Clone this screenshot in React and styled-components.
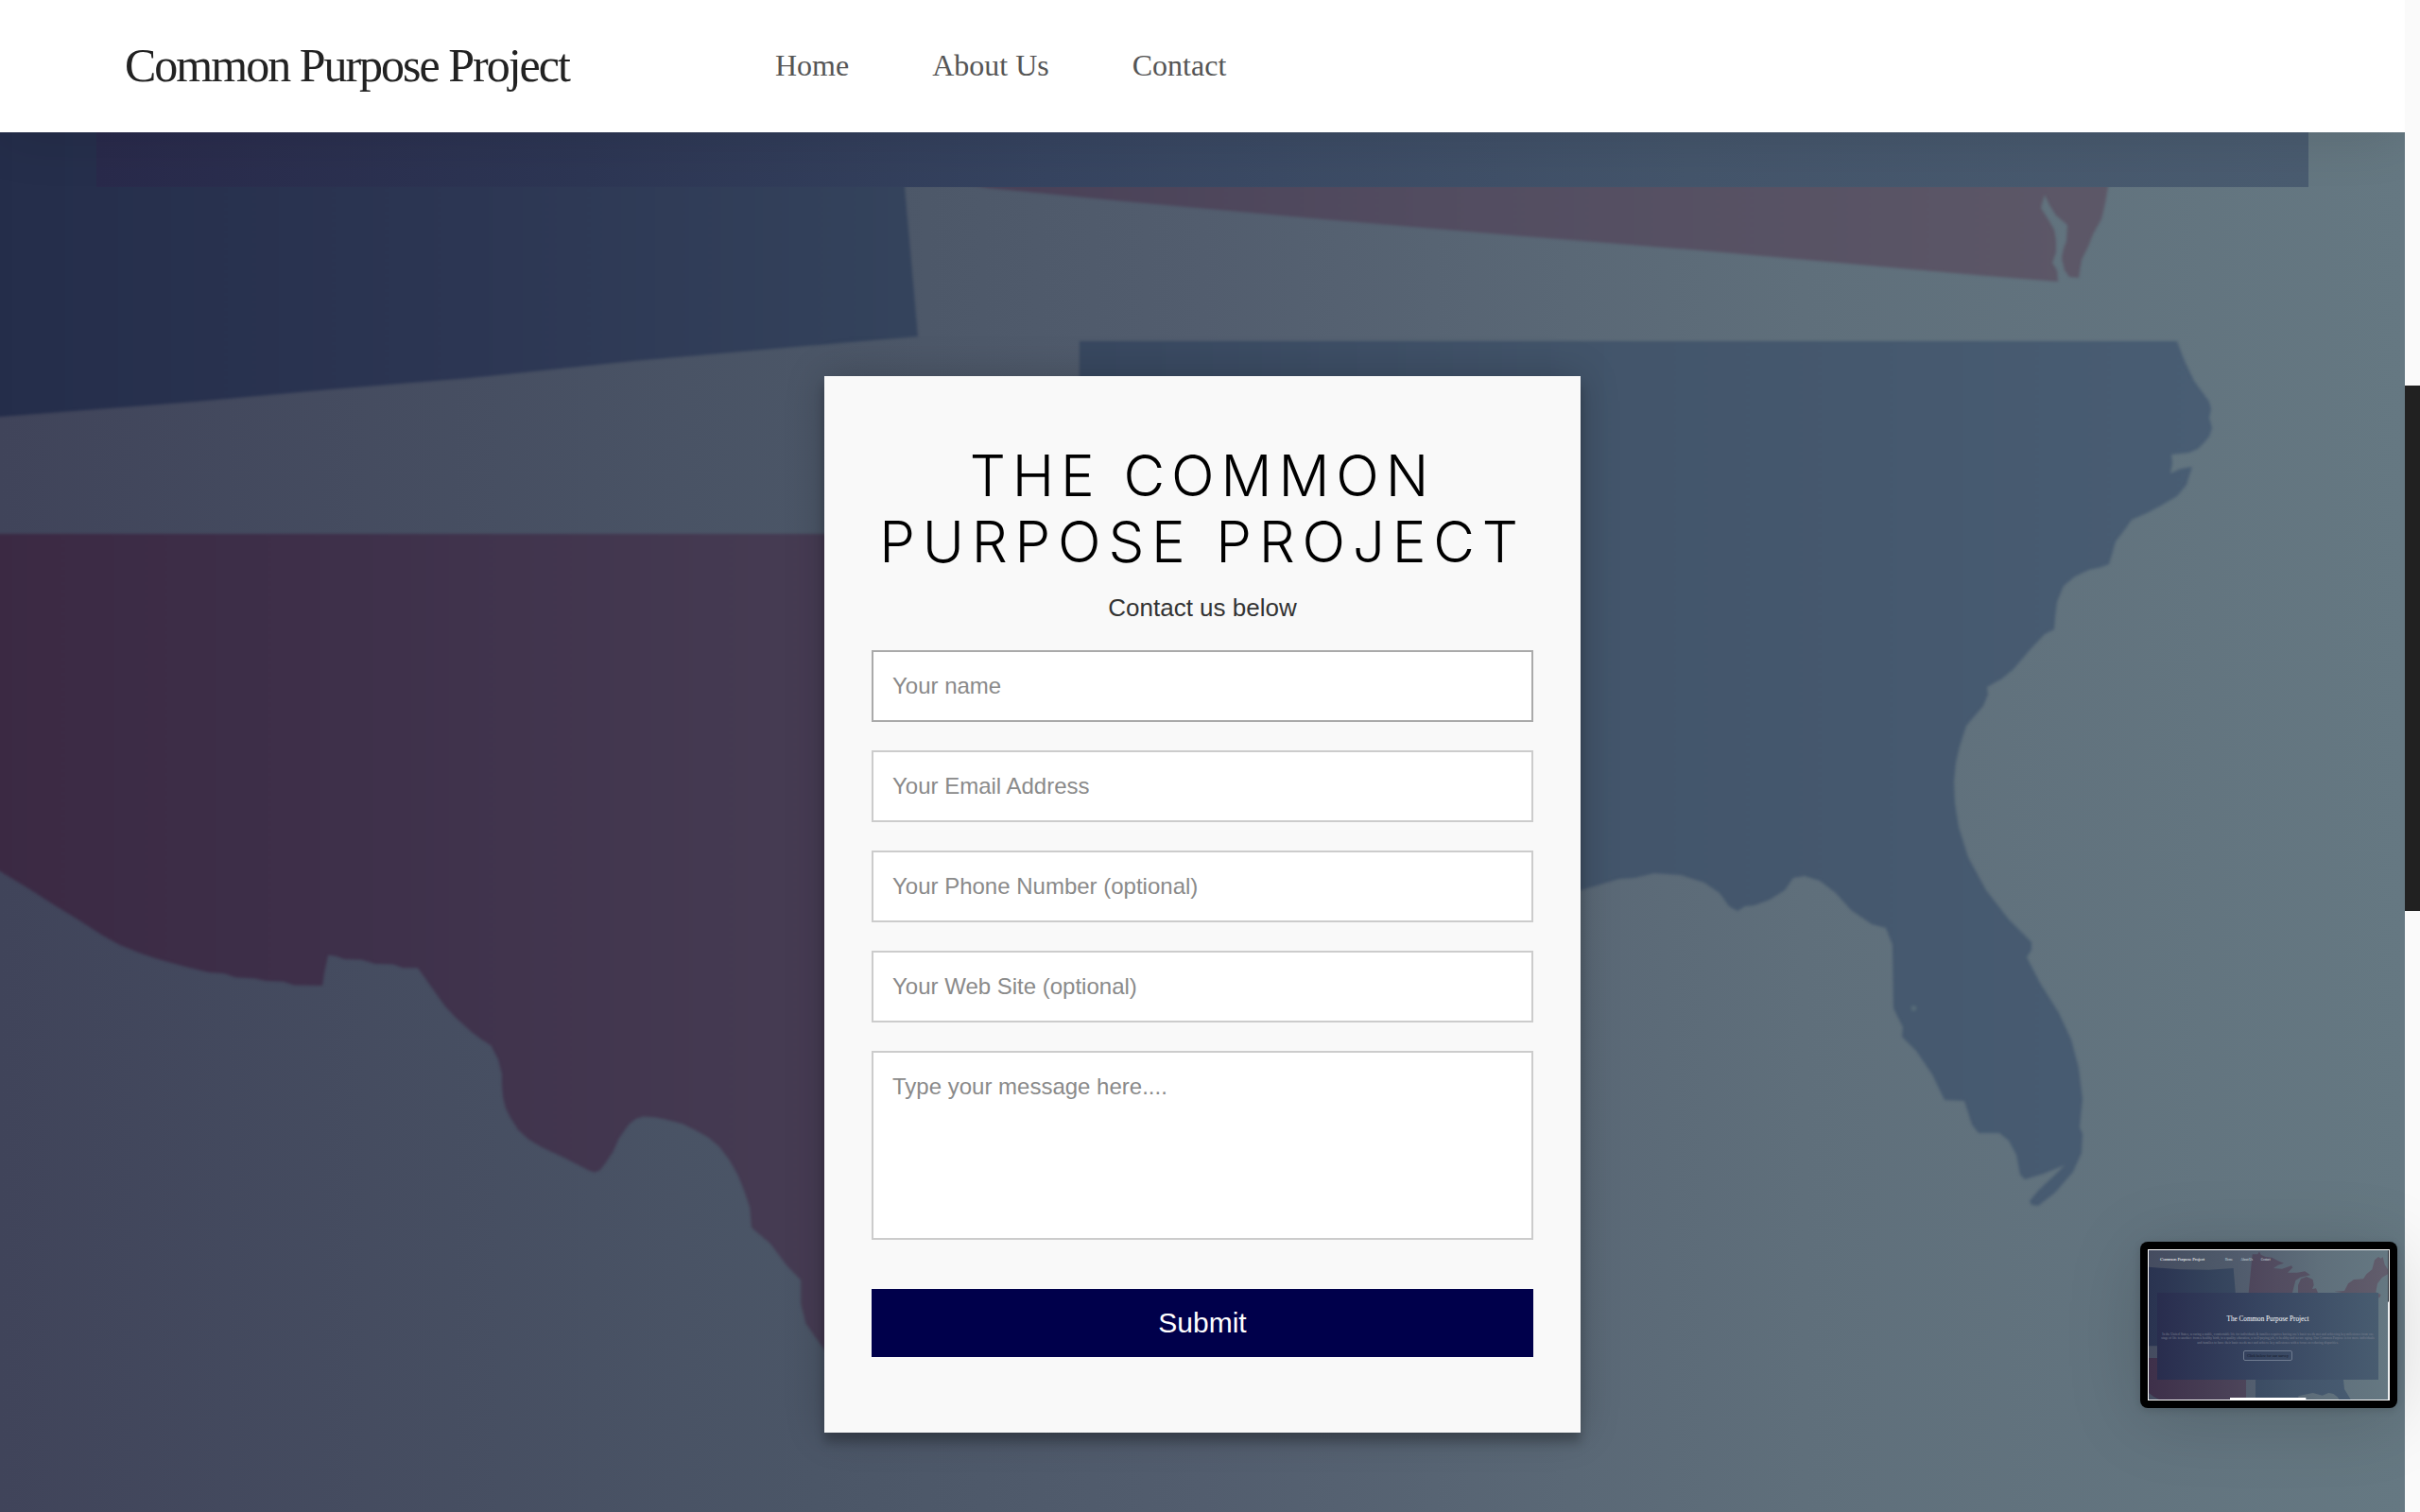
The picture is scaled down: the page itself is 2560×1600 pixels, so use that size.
import React from "react";
import styled, { createGlobalStyle } from "styled-components";

const GlobalStyle = createGlobalStyle`
  * { box-sizing: border-box; }
  body { margin: 0; background: #f9f9f9; overflow: hidden; }
`;

const serif = `"Liberation Serif", "Times New Roman", serif`;
const sans = `"Liberation Sans", Arial, sans-serif`;

const Screen = styled.div`
  display: grid;
  grid-template-columns: 1fr 16px;
  width: 2560px;
  height: 1600px;
  overflow: hidden;
`;
const Page = styled.div`
  display: flex;
  flex-direction: column;
  min-width: 0;
  overflow: hidden;
`;
const Header = styled.header`
  position: relative;
  z-index: 1;
  display: flex;
  align-items: center;
  height: 140px;
  padding: 0 0 2px 132px;
  background: #fff;
  box-shadow: 0 4px 60px rgba(0, 0, 0, 0.12);
`;
const Brand = styled.a`
  width: 688px;
  padding-bottom: 1px;
  font: 50px/60px ${serif};
  letter-spacing: -2px;
  color: #222;
`;
const Nav = styled.nav`
  display: flex;
  gap: 88px;
  font: 32px/40px ${serif};
  color: #555;
`;
const NavLink = styled.a``;

const Hero = styled.main`
  position: relative;
  flex: 1;
  display: flex;
  flex-direction: column;
  align-items: center;
  overflow: hidden;
`;
const Backdrop = styled.svg`
  position: absolute;
  inset: 0;
  width: 100%;
  height: 100%;
`;
const Banner = styled.div`
  position: relative;
  width: 2340px;
  height: 58px;
  background: linear-gradient(90deg, #292a4b, #2d3654 22%, #364460 43%, #44556b 72%, #4a5c70);
`;
const Card = styled.form`
  position: relative;
  display: flex;
  flex-direction: column;
  width: 800px;
  height: 1118px;
  margin-top: 200px;
  padding: 70px 50px 80px;
  background: #f9f9f9;
  box-shadow: 0 0 40px rgba(0, 0, 0, 0.2), 0 10px 10px rgba(0, 0, 0, 0.24);
`;
const Title = styled.h1`
  display: flex;
  flex-direction: column;
  align-items: center;
  margin: 0 -10px;
  font: 300 60px/70px Inter, sans-serif;
  white-space: nowrap;
  color: #000;
`;
const TitleLine = styled.span`
  letter-spacing: ${(p) => p.$tracking}px;
`;
const Lead = styled.p`
  margin: 18px 0 27px;
  font: 26px/35px ${sans};
  text-align: center;
  color: #333;
`;
const Fields = styled.div`
  display: flex;
  flex-direction: column;
  gap: 30px;
`;
const Field = styled.input`
  display: block;
  width: 100%;
  height: ${(p) => p.$height || 76}px;
  padding: 20px;
  border: 2px solid ${(p) => (p.$active ? "#aaa" : "#ccc")};
  border-radius: 0;
  outline: none;
  resize: none;
  background: #fff;
  font: 24px/32px ${sans};
  &::placeholder { color: #8a8a8a; opacity: 1; }
`;
const Submit = styled.button`
  height: 72px;
  margin-top: 52px;
  padding: 0;
  border: 0;
  background: #00004b;
  color: #fff;
  font: 30px/72px ${sans};
`;

const Strip = styled.aside`
  display: flex;
  flex-direction: column;
  padding-top: 408px;
  background: #fafafa;
`;
const StripBlock = styled.div`
  height: 556px;
  background: #212121;
`;

const Preview = styled.div`
  position: absolute;
  left: 2264px;
  top: 1314px;
  z-index: 2;
  width: 272px;
  height: 176px;
  padding: 8px;
  border-radius: 8px;
  background: #000;
  box-shadow: 0 10px 80px rgba(0, 0, 0, 0.15), 0 2px 8px rgba(0, 0, 0, 0.14);
`;
const PreviewScreen = styled.div`
  position: relative;
  height: 160px;
  font-family: ${serif};
  border: 1px solid #fff;
  overflow: hidden;
`;
const PreviewHeader = styled.div`
  position: relative;
  display: flex;
  align-items: center;
  height: 19px;
  padding-left: 12px;
`;
const PreviewBrand = styled.span`
  width: 69px;
  font-size: 5px;
  letter-spacing: -0.2px;
  color: #fff;
`;
const PreviewNav = styled.span`
  display: flex;
  gap: 8.8px;
  font-size: 3.2px;
  color: #dfe3e8;
`;
const PreviewBody = styled.div`
  position: relative;
  display: flex;
  flex-direction: column;
  align-items: center;
  width: 234px;
  height: 92px;
  margin: 26px 0 0 9px;
  padding-top: 23.5px;
  background: linear-gradient(90deg, #292d4e, #364460 45%, #485c70);
`;
const PreviewTitle = styled.div`
  font-size: 7.2px;
  line-height: 9px;
  white-space: nowrap;
  color: #fff;
`;
const PreviewText = styled.div`
  margin-top: 9px;
  font-size: 3.5px;
  line-height: 4.8px;
  text-align: center;
  white-space: nowrap;
  color: #7b8090;
`;
const PreviewButton = styled.div`
  width: 52px;
  height: 11px;
  margin-top: 5.5px;
  border: 1px solid #6f7b90;
  border-radius: 2px;
  font-size: 4.1px;
  line-height: 9px;
  text-align: center;
  color: #10141f;
`;

const WEST_BLUE = "-20,100 953,100 957,198 971,356 842,367 670,382 497,400 350,412 207,425 0,441 -20,443";
const WEST_COAST = [
  [1518, 1430], [1500, 1392], [1485, 1360], [1476, 1305], [1476, 1240], [1450, 1200], [1420, 1140], [1385, 1095],
  [1382, 1040], [1372, 995], [1360, 950], [1345, 910], [1325, 870], [1305, 845], [1285, 828], [1258, 808],
  [1230, 797], [1207, 790], [1185, 788], [1172, 794], [1160, 808], [1150, 828], [1140, 850], [1130, 885],
  [1112, 925], [1104, 938], [1095, 942], [1085, 937], [1040, 902], [1000, 874], [975, 852], [955, 825],
  [940, 790], [932, 765], [927, 735], [925, 700], [925, 670], [918, 630], [905, 592], [885, 572], [868, 553],
  [840, 515], [820, 483], [795, 430], [770, 377], [742, 377], [725, 367], [692, 366], [665, 354], [635, 353],
  [620, 345], [605, 341], [599, 380], [594, 426], [542, 425], [522, 415], [490, 413], [470, 406], [435, 403],
  [412, 392], [385, 389], [340, 373], [290, 352], [260, 337], [220, 313], [190, 288], [140, 240], [100, 203],
  [50, 155], [0, 110], [-30, 82],
].map(([x, y]) => `${(x * 0.574).toFixed(1)},${(880 + y / 2.613).toFixed(1)}`);
const WEST_RED = `-20,565 900,565 900,1460 ${WEST_COAST.join(" ")}`;
const EAST_RED = `1000,190 2232,190 2230,198 2227,215 2223,232 2214,248 2209,261 2202,275 2199,294 2189,293 2184,286
  2181,273 2183,263 2186,255 2187,238 2175,228 2168,217 2163,206 2159,220 2166,231 2173,243 2175,255 2175,267
  2171,278 2176,286 2177,298 2090,291 2000,283 1800,265 1600,249 1400,232 1200,214 1045,199`;
const EAST_BLUE = `1142,361 2303,361 2311,382 2321,403 2337,425 2339,433 2337,442 2340,453 2337,462 2332,468 2325,475
  2316,479 2297,481 2298,490 2296,501 2307,496 2319,494 2316,503 2313,513 2303,525 2286,535 2271,543 2255,550
  2248,560 2238,573 2234,587 2231,597 2223,600 2210,603 2195,610 2183,620 2176,637 2174,653 2173,666 2163,671
  2147,688 2130,708 2118,718 2102,727 2103,735 2098,747 2080,768 2073,790 2069,807 2067,827 2068,850 2072,875
  2082,907 2101,942 2125,973 2149,997 2149,1005 2144,1013 2158,1040 2178,1072 2191,1100 2199,1130 2203,1163
  2200,1193 2203,1200 2202,1220 2193,1240 2174,1262 2156,1276 2149,1275 2147,1271 2156,1260 2174,1243 2184,1233
  2162,1242 2142,1248 2137,1243 2133,1222 2125,1207 2115,1199 2093,1199 2086,1190 2078,1165 2057,1164 2044,1137
  2027,1112 2012,1097 2013,1087 2003,1067 2002,1000 1995,982 1980,978 1958,963 1942,945 1925,932 1909,927
  1897,929 1888,942 1872,952 1856,958 1846,959 1838,964 1829,959 1819,945 1803,934 1778,926 1750,924 1729,929
  1713,930 1693,936 1672,942 1600,960 1142,960`;

const Stops = ({ id, x2, colors }) => (
  <linearGradient id={id} gradientUnits="userSpaceOnUse" x1="0" y1="0" x2={x2} y2="0">
    {colors.map(([o, c]) => (
      <stop key={o} offset={o} stopColor={c} />
    ))}
  </linearGradient>
);
const LAND = [[0, "#40445a"], [0.34, "#4b5667"], [0.5, "#525d6e"], [0.75, "#5f6f7b"], [1, "#657882"]];
const BLUE = [[0, "#242d4a"], [0.2, "#2c3653"], [0.38, "#34435c"], [0.66, "#42546a"], [0.9, "#485c72"], [1, "#4b6076"]];
const RED = [[0, "#3b2943"], [0.15, "#3e304a"], [0.35, "#463c53"], [0.6, "#524c60"], [0.87, "#5c5767"], [1, "#625e6d"]];

const MapBackdrop = () => (
  <Backdrop viewBox="0 140 2544 1460" preserveAspectRatio="none">
    <defs>
      <Stops id="land" x2="2544" colors={LAND} />
      <Stops id="blue" x2="2544" colors={BLUE} />
      <Stops id="red" x2="2544" colors={RED} />
      <filter id="soft" filterUnits="userSpaceOnUse" x="-40" y="80" width="2640" height="1560" colorInterpolationFilters="sRGB">
        <feGaussianBlur stdDeviation="1.8" />
      </filter>
    </defs>
    <rect x="0" y="140" width="2544" height="1460" fill="url(#land)" />
    <g filter="url(#soft)">
      <polygon points={WEST_BLUE} fill="url(#blue)" />
      <polygon points={WEST_RED} fill="url(#red)" />
      <polygon points={EAST_RED} fill="url(#red)" />
      <polygon points={EAST_BLUE} fill="url(#blue)" />
      <circle cx="2024.5" cy="1067" r="3" fill="#566a78" />
    </g>
  </Backdrop>
);

const PreviewMap = () => (
  <Backdrop viewBox="129 129 762 474" preserveAspectRatio="none">
    <defs>
      <Stops id="pland" x2="891" colors={LAND} />
      <Stops id="pblue" x2="891" colors={BLUE} />
      <Stops id="pred" x2="891" colors={RED} />
    </defs>
    <rect x="126" y="126" width="768" height="480" fill="url(#pland)" />
    <polygon points="126,182 230,190 320,191 398,186 410,330 410,433 126,433" fill="url(#pblue)" />
    <polygon points="126,471 438,471 438,606 168,606 145,594 126,580" fill="url(#pred)" />
    <polygon points="446,264 458,142 475,142 480,133 485,143 500,150 520,152 540,163 558,170 540,176 525,186 552,188 582,178 586,184 570,200 600,200 625,196 642,208 610,215 595,225 585,264" fill="url(#pred)" />
    <polygon points="603,264 603,240 612,220 630,213 650,222 653,240 648,252 660,250 666,264" fill="url(#pred)" />
    <polygon points="718,260 750,258 762,235 780,222 810,220 820,205 838,190 846,160 858,150 866,155 872,150 878,175 888,190 888,205 870,215 855,235 850,262 866,270 862,280 840,278" fill="url(#pred)" />
    <polygon points="468,530 746,530 750,570 772,606 735,606 728,595 715,585 700,582 680,590 650,582 625,587 604,592 604,606 468,606" fill="url(#pblue)" />
    <rect x="387" y="597" width="241" height="9" fill="#fff" />
    <rect x="888" y="126" width="6" height="167" fill="#2a2f38" />
    <rect x="888" y="293" width="6" height="313" fill="#e8ebed" />
  </Backdrop>
);

export default function App() {
  return (
    <>
      <GlobalStyle />
      <Screen>
        <Page>
          <Header>
            <Brand>Common Purpose Project</Brand>
            <Nav>
              <NavLink>Home</NavLink>
              <NavLink>About Us</NavLink>
              <NavLink>Contact</NavLink>
            </Nav>
          </Header>
          <Hero>
            <MapBackdrop />
            <Banner />
            <Card>
              <Title>
                <TitleLine $tracking={6.9}>THE COMMON</TitleLine>
                <TitleLine $tracking={7.8}>PURPOSE PROJECT</TitleLine>
              </Title>
              <Lead>Contact us below</Lead>
              <Fields>
                <Field $active placeholder="Your name" />
                <Field placeholder="Your Email Address" />
                <Field placeholder="Your Phone Number (optional)" />
                <Field placeholder="Your Web Site (optional)" />
                <Field as="textarea" $height={200} placeholder="Type your message here...." />
              </Fields>
              <Submit type="button">Submit</Submit>
            </Card>
          </Hero>
        </Page>
        <Strip>
          <StripBlock />
        </Strip>
      </Screen>
      <Preview>
        <PreviewScreen>
          <PreviewMap />
          <PreviewHeader>
            <PreviewBrand>Common Purpose Project</PreviewBrand>
            <PreviewNav>
              <span>Home</span>
              <span>About Us</span>
              <span>Contact</span>
            </PreviewNav>
          </PreviewHeader>
          <PreviewBody>
            <PreviewTitle>The Common Purpose Project</PreviewTitle>
            <PreviewText>
              In the United States, securing a stable, comfortable life for individuals &amp; families requires having one's basic needs met and achieving key milestones from one
              <br />
              stage of life to another: from a healthy birth, to a quality education, a well-paying job, to healthy and secure aging. Our Common Purpose is for more individuals
              <br />
              and families to have their basic needs met and achieve key milestones with a focus on reducing disparities.
            </PreviewText>
            <PreviewButton>Click below for our survey</PreviewButton>
          </PreviewBody>
        </PreviewScreen>
      </Preview>
    </>
  );
}
